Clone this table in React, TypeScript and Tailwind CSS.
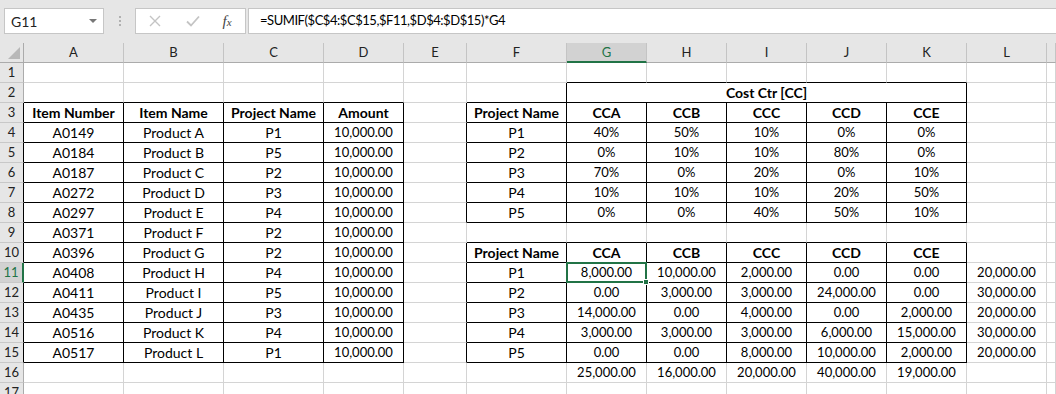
import React from "react";

const COLS = ["A", "B", "C", "D", "E", "F", "G", "H", "I", "J", "K", "L", ""];
const ROWS = Array.from({ length: 17 }, (_, i) => i + 1);

type Cell = { text: string; bold?: boolean; num?: boolean };

const items: [string, string, string][] = [
  ["A0149", "Product A", "P1"],
  ["A0184", "Product B", "P5"],
  ["A0187", "Product C", "P2"],
  ["A0272", "Product D", "P3"],
  ["A0297", "Product E", "P4"],
  ["A0371", "Product F", "P2"],
  ["A0396", "Product G", "P2"],
  ["A0408", "Product H", "P4"],
  ["A0411", "Product I", "P5"],
  ["A0435", "Product J", "P3"],
  ["A0516", "Product K", "P4"],
  ["A0517", "Product L", "P1"],
];

const shares: number[][] = [
  [40, 50, 10, 0, 0],
  [0, 10, 10, 80, 0],
  [70, 0, 20, 0, 10],
  [10, 10, 10, 20, 50],
  [0, 0, 40, 50, 10],
];

const allocated: string[][] = [
  ["8,000.00", "10,000.00", "2,000.00", "0.00", "0.00", "20,000.00"],
  ["0.00", "3,000.00", "3,000.00", "24,000.00", "0.00", "30,000.00"],
  ["14,000.00", "0.00", "4,000.00", "0.00", "2,000.00", "20,000.00"],
  ["3,000.00", "3,000.00", "3,000.00", "6,000.00", "15,000.00", "30,000.00"],
  ["0.00", "0.00", "8,000.00", "10,000.00", "2,000.00", "20,000.00"],
];

const totals = ["25,000.00", "16,000.00", "20,000.00", "40,000.00", "19,000.00"];
const centers = ["CCA", "CCB", "CCC", "CCD", "CCE"];

// r: 1-based sheet row, c: 0-based column (A = 0)
function valueAt(r: number, c: number): Cell | null {
  if (r === 3 && c <= 3)
    return { text: ["Item Number", "Item Name", "Project Name", "Amount"][c], bold: true };
  if (r >= 4 && r <= 15 && c <= 3) {
    const it = items[r - 4];
    return c === 3 ? { text: "10,000.00", num: true } : { text: it[c] };
  }
  if ((r === 3 || r === 10) && c === 5) return { text: "Project Name", bold: true };
  if ((r === 3 || r === 10) && c >= 6 && c <= 10) return { text: centers[c - 6], bold: true };
  if (r >= 4 && r <= 8 && c === 5) return { text: `P${r - 3}` };
  if (r >= 4 && r <= 8 && c >= 6 && c <= 10)
    return { text: `${shares[r - 4][c - 6]}%`, num: true };
  if (r >= 11 && r <= 15 && c === 5) return { text: `P${r - 10}` };
  if (r >= 11 && r <= 15 && c >= 6 && c <= 11)
    return { text: allocated[r - 11][c - 6], num: true };
  if (r === 16 && c >= 6 && c <= 10) return { text: totals[c - 6], num: true };
  return null;
}

function boxed(r: number, c: number): boolean {
  if (r >= 3 && r <= 15 && c >= 0 && c <= 3) return true;
  if (r === 2 && c >= 6 && c <= 10) return true;
  if (r >= 3 && r <= 8 && c >= 5 && c <= 10) return true;
  if (r >= 10 && r <= 15 && c >= 5 && c <= 10) return true;
  return false;
}

const FONT = { fontFamily: "Lato, 'Open Sans', sans-serif" };

function FormulaBar() {
  return (
    <div className="flex h-[43px] items-start bg-[#e6e6e6] pt-[8px]">
      <div className="ml-[4px] flex h-[26px] w-[100px] items-center justify-between border border-[#c6c6c6] bg-white pl-[6px] pr-[6px]">
        <span className="text-[14px] text-[#222]">G11</span>
        <svg width="8" height="5" viewBox="0 0 8 5">
          <path d="M0 0 L8 0 L4 4 Z" fill="#777" />
        </svg>
      </div>
      <div className="flex h-[26px] w-[31px] flex-col items-center justify-center gap-[2px]">
        <span className="h-[2px] w-[2px] bg-[#b0b0b0]" />
        <span className="h-[2px] w-[2px] bg-[#b0b0b0]" />
        <span className="h-[2px] w-[2px] bg-[#b0b0b0]" />
      </div>
      <div className="flex h-[26px] w-[111px] items-center border border-[#c6c6c6] bg-white">
        <div className="flex w-[38px] justify-center">
          <svg width="12" height="12" viewBox="0 0 12 12">
            <path d="M1 1 L11 11 M11 1 L1 11" stroke="#c4c4c4" strokeWidth="1.4" />
          </svg>
        </div>
        <div className="flex w-[38px] justify-center">
          <svg width="14" height="12" viewBox="0 0 14 12">
            <path d="M1 6.5 L5 10.5 L13 1.5" stroke="#c4c4c4" strokeWidth="1.8" fill="none" />
          </svg>
        </div>
        <div className="flex w-[30px] justify-center">
          <span
            className="text-[15px] italic text-[#444]"
            style={{ fontFamily: "'Liberation Serif', serif" }}
          >
            f<span className="text-[11px]">x</span>
          </span>
        </div>
      </div>
      <div className="ml-[2px] flex h-[26px] flex-1 items-center border-y border-l border-[#c6c6c6] bg-white pl-[11px]">
        <span className="text-[13px] tracking-[-0.45px] text-black">
          =SUMIF($C$4:$C$15,$F11,$D$4:$D$15)*G4
        </span>
      </div>
    </div>
  );
}

function HeaderRow() {
  return (
    <>
      <div className="relative h-[20px] border-r border-b border-[#ababab] bg-[#e6e6e6]">
        <svg className="absolute bottom-[3px] right-[3px]" width="12" height="12" viewBox="0 0 12 12">
          <path d="M12 0 L12 12 L0 12 Z" fill="#b8b8b8" />
        </svg>
      </div>
      {COLS.map((name, c) => {
        const sel = c === 6;
        return (
          <div
            key={c}
            className={
              sel
                ? "flex h-[20px] items-center justify-center border-r border-b-2 border-r-[#c4c4c4] border-b-[#217346] bg-[#d2d2d2] pt-[2px] text-[13px] text-[#217346]"
                : "flex h-[20px] items-center justify-center border-r border-b border-r-[#c4c4c4] border-b-[#ababab] bg-[#e6e6e6] text-[13px] text-[#222]"
            }
          >
            {name}
          </div>
        );
      })}
    </>
  );
}

function RowHeader({ r }: { r: number }) {
  const sel = r === 11;
  const inTable = r >= 3 && r <= 15;
  let cls =
    "flex h-[20px] items-center justify-center border-b border-b-[#c8c8c8] text-[13px] ";
  if (sel) cls += "border-r-2 border-r-[#217346] bg-[#d2d2d2] text-[#217346]";
  else if (inTable) cls += "border-r border-r-black bg-[#e6e6e6] text-[#222]";
  else cls += "border-r border-r-[#ababab] bg-[#e6e6e6] text-[#222]";
  return <div className={cls}>{r}</div>;
}

function SheetCell({ r, c }: { r: number; c: number }) {
  const v = valueAt(r, c);
  const rightBlack = boxed(r, c) || boxed(r, c + 1);
  const bottomBlack = boxed(r, c) || boxed(r + 1, c);
  const selected = r === 11 && c === 6;
  const cls =
    "relative flex h-[20px] items-center justify-center whitespace-nowrap border-r border-b text-black " +
    (rightBlack ? "border-r-black " : "border-r-[#d4d4d4] ") +
    (bottomBlack ? "border-b-black " : "border-b-[#d4d4d4] ") +
    (v?.num ? "text-[13px] " : "text-[14px] ") +
    (v?.bold ? "font-bold " : "") +
    (selected ? "z-10" : "");
  return (
    <div className={cls}>
      <span className="leading-none">{v?.text}</span>
      {selected && (
        <>
          <div className="pointer-events-none absolute -left-[1px] -top-[1px] h-[21px] w-[81px] border-2 border-[#217346]" />
          <div className="absolute -bottom-[3px] -right-[3px] h-[6px] w-[6px] border border-white bg-[#217346]" />
        </>
      )}
    </div>
  );
}

function SheetRow({ r }: { r: number }) {
  const cells: React.ReactNode[] = [<RowHeader key="h" r={r} />];
  for (let c = 0; c < COLS.length; c++) {
    if (r === 2 && c === 6) {
      cells.push(
        <div
          key={c}
          className="col-span-5 flex h-[20px] items-center justify-center border-r border-b border-black text-[14px] font-bold text-black"
        >
          <span className="leading-none">Cost Ctr [CC]</span>
        </div>
      );
      c += 4;
      continue;
    }
    cells.push(<SheetCell key={c} r={r} c={c} />);
  }
  return <>{cells}</>;
}

export default function App() {
  return (
    <div className="h-[394px] w-[1056px] overflow-hidden bg-white" style={FONT}>
      <FormulaBar />
      <div className="grid grid-cols-[24px_100px_100px_100px_80px_63px_100px_80px_80px_80px_80px_80px_80px_1fr]">
        <HeaderRow />
        {ROWS.map((r) => (
          <SheetRow key={r} r={r} />
        ))}
      </div>
    </div>
  );
}
